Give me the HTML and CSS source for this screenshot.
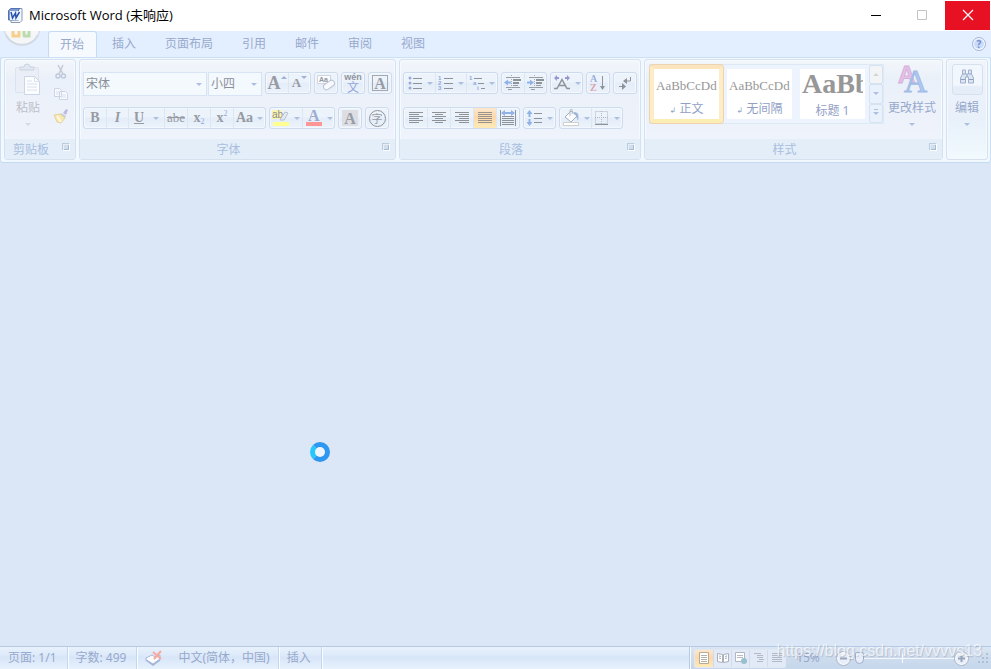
FILE: index.html
```html
<!DOCTYPE html>
<html lang="zh-CN">
<head>
    <meta charset="UTF-8">
    <meta name="viewport" content="width=device-width, initial-scale=1.0">
    <title>Microsoft Word (未响应)</title>
    <link rel="stylesheet" href="styles.css">
</head>
<body>
    <header class="titlebar">
        <svg class="app-icon" width="16" height="16" viewBox="0 0 16 16">
            <path d="M4 1.500h11v12l-2 2H4z" fill="#f4f7fc" stroke="#8a98b5"/>
            <path d="M1.500 3.500 4 1.500h9L11.500 3v10h-10z" fill="#7d9bd6" stroke="#5672ab"/>
            <path d="M3 4h10v9H3z" fill="#eef4ff"/>
            <path d="M4 5l1.500 6L8.500 6l.5 5 3.500-6" fill="none" stroke="#2a52ae" stroke-width="1.500"/>
        </svg>
        <h1>Microsoft Word (未响应)</h1>
        <div class="window-buttons">
            <button aria-label="最小化"><svg width="12" height="12" viewBox="0 0 12 12"><path d="M1 6.500h10" stroke="#000"/></svg></button>
            <button aria-label="最大化" disabled><svg width="12" height="12" viewBox="0 0 12 12"><path d="M1.500 1.500h9v9h-9z" fill="none" stroke="#c4c4c4"/></svg></button>
            <button class="close" aria-label="关闭"><svg width="12" height="12" viewBox="0 0 12 12"><path d="M1 1l10 10M11 1L1 11" stroke="#fff" stroke-width="1.200"/></svg></button>
        </div>
    </header>

    <nav class="tabs">
        <button class="office" aria-label="Office 按钮">
            <svg width="36" height="16" viewBox="0 0 36 16">
                <circle cx="18" cy="-4" r="18" fill="#f5f6f8" stroke="#cbd3df"/>
                <path d="M2 4a18 18 0 0 0 32 0" fill="none" stroke="#d3dae4" stroke-width="2"/>
                <path d="M9 0v5h6V1M15 5V0" fill="none" stroke="#f5d08c" stroke-width="3"/>
                <path d="M19 5h6V0M20 5V0" fill="none" stroke="#bcdcae" stroke-width="3"/>
            </svg>
        </button>
        <button class="tab active">开始</button>
        <button class="tab">插入</button>
        <button class="tab">页面布局</button>
        <button class="tab">引用</button>
        <button class="tab">邮件</button>
        <button class="tab">审阅</button>
        <button class="tab">视图</button>
        <button class="help" aria-label="帮助">?</button>
    </nav>

    <div class="ribbon">
        <section class="group clipboard">
            <div class="group-body">
                <button class="big-button paste">
                    <svg width="28" height="32" viewBox="0 0 28 32">
                        <rect x="1.500" y="3.500" width="23" height="25" rx="1" fill="#e9eef7" stroke="#dce3ee"/>
                        <path d="M6 6V3h4a3 3 0 0 1 6 0h4v3z" fill="#e2e8f2" stroke="#cbd3e0"/>
                        <path d="M10.500 12.500h10l5 5v13h-15z" fill="#fcfdff" stroke="#cbd5e6"/>
                        <path d="M20.500 12.500v5h5M13 17h5M13 20h10M13 23h10M13 26h10" fill="none" stroke="#dae1ec"/>
                    </svg>
                    <span>粘贴</span>
                    <i class="caret"></i>
                </button>
                <div class="side-buttons">
                    <button aria-label="剪切"><svg width="16" height="16" viewBox="0 0 16 16"><path d="M5 1l5 9M10 1L6 10" stroke="#c4cad5" stroke-width="1.500"/><circle cx="5" cy="12" r="2" fill="none" stroke="#bfc9dc" stroke-width="1.500"/><circle cx="10.500" cy="12" r="2" fill="none" stroke="#bfc9dc" stroke-width="1.500"/></svg></button>
                    <button aria-label="复制"><svg width="16" height="16" viewBox="0 0 16 16"><path d="M1.500 2.500h5l2 2v6h-7zM6.500 5.500h6l2 2v6h-8z" fill="#f8faff" stroke="#ccd5e4"/><path d="M3 6h3M3 8h3M8 9h5M8 11h5" stroke="#dae1ed"/></svg></button>
                    <button aria-label="格式刷"><svg width="16" height="16" viewBox="0 0 16 16"><path d="M10 5l3-4 2 1-2 5z" fill="#bdbce0"/><path d="M8 5l5 3-1 2-5-3z" fill="#c9cbd8"/><path d="M1 7l6-1 5 4-4 5-4-1z" fill="#f7e8b2" stroke="#e4d19b"/><path d="M4 8l4 6" stroke="#fff9df" stroke-width="2"/></svg></button>
                </div>
            </div>
            <footer>剪贴板<button class="launcher" aria-label="剪贴板选项"></button></footer>
        </section>

        <section class="group font">
            <div class="group-body">
                <div class="row">
                    <div class="combo">
                        <label class="select name"><select aria-label="字体"><option>宋体</option></select><i class="caret"></i></label>
                        <label class="select size"><select aria-label="字号"><option>小四</option></select><i class="caret"></i></label>
                    </div>
                    <div class="set">
                        <button aria-label="增大字体"><b class="grow">A</b><i class="mark up"></i></button>
                        <button aria-label="缩小字体"><b class="shrink">A</b><i class="mark"></i></button>
                    </div>
                    <div class="set"><button aria-label="清除格式"><svg width="20" height="18" viewBox="0 0 20 18"><path d="M1.500 1.500h13v8h-13z" fill="#fafcff" stroke="#d0d6df"/><text x="3" y="8" class="tiny">Aa</text><rect x="7" y="8" width="12" height="6" rx="3" transform="rotate(-35 13 11)" fill="#f8fafd" stroke="#b9c2d4"/></svg></button></div>
                    <div class="set"><button class="pinyin" aria-label="拼音指南"><small>wén</small><span>文</span></button></div>
                    <div class="set"><button aria-label="字符边框"><b class="boxed">A</b></button></div>
                </div>
                <div class="row">
                    <div class="set">
                        <button aria-label="加粗"><b>B</b></button>
                        <button aria-label="倾斜"><b class="italic">I</b></button>
                        <button class="wide" aria-label="下划线"><b class="under">U</b><i class="caret"></i></button>
                        <button class="script" aria-label="删除线"><s>abe</s></button>
                        <button class="script" aria-label="下标"><b>x</b><sub>2</sub></button>
                        <button class="script" aria-label="上标"><b>x</b><sup>2</sup></button>
                        <button class="drop" aria-label="更改大小写"><b>Aa</b><i class="caret"></i></button>
                    </div>
                    <div class="set">
                        <button class="drop" aria-label="突出显示"><svg width="18" height="18" viewBox="0 0 18 18"><path d="M0 1h10v9H0z" fill="#faf3b6"/><text x="0" y="9" class="ab">ab</text><path d="M8 11l5-8 3 1-4 7z" fill="#e7ecf4" stroke="#b4bfd3"/><path d="M1 13h16v4H1z" fill="#ffff91"/></svg><i class="caret"></i></button>
                        <button class="drop" aria-label="字体颜色"><svg width="18" height="18" viewBox="0 0 18 18"><text x="3" y="12" class="color-a">A</text><path d="M1 13h16v4H1z" fill="#ff9696"/></svg><i class="caret"></i></button>
                    </div>
                    <div class="set"><button aria-label="字符底纹"><b class="shaded">A</b></button></div>
                    <div class="set"><button aria-label="带圈字符"><span class="circled">字</span></button></div>
                </div>
            </div>
            <footer>字体<button class="launcher" aria-label="字体选项"></button></footer>
        </section>

        <section class="group paragraph">
            <div class="group-body">
                <div class="row">
                    <div class="set">
                        <button class="drop" aria-label="项目符号"><svg width="16" height="16" viewBox="0 0 16 16"><g fill="#9aabd9"><circle cx="3" cy="3" r="1.500"/><circle cx="3" cy="8" r="1.500"/><circle cx="3" cy="13" r="1.500"/></g><path d="M6 3.500h9M6 8.500h9M6 13.500h9" stroke="#8e9299"/></svg><i class="caret"></i></button>
                        <button class="drop" aria-label="编号"><svg width="16" height="16" viewBox="0 0 16 16"><g class="digits"><text x="0" y="5">1</text><text x="0" y="10">2</text><text x="0" y="15">3</text></g><path d="M6 3.500h9M6 8.500h9M6 13.500h9" stroke="#8e9299"/></svg><i class="caret"></i></button>
                        <button class="drop" aria-label="多级列表"><svg width="16" height="16" viewBox="0 0 16 16"><g class="digits"><text x="0" y="5">1</text><text x="4" y="10">a</text><text x="8" y="15">i</text></g><path d="M5 3.500h8M9 8.500h6M12 13.500h4" stroke="#8e9299"/></svg><i class="caret"></i></button>
                    </div>
                    <div class="set">
                        <button aria-label="减少缩进量"><svg width="18" height="16" viewBox="0 0 18 16"><path d="M2 2.500h14M9 10.500h5M2 12.500h14M4 14.500h4" stroke="#989ca3"/><path d="M9 5h8M9 8h6" stroke="#8e9299" stroke-width="2"/><path d="M7.500 0v16" stroke="#a5abb4" stroke-dasharray="1 1"/><path d="M0 7.500l4-3v2h3v2H4v2z" fill="#8fb2e8"/></svg></button>
                        <button aria-label="增加缩进量"><svg width="18" height="16" viewBox="0 0 18 16"><path d="M2 2.500h14M9 10.500h5M2 12.500h14M4 14.500h4" stroke="#989ca3"/><path d="M9 5h8M9 8h6" stroke="#8e9299" stroke-width="2"/><path d="M7.500 0v16" stroke="#a5abb4" stroke-dasharray="1 1"/><path d="M7 7.500l-4-3v2H0v2h3v2z" fill="#8fb2e8"/></svg></button>
                    </div>
                    <div class="set"><button class="drop" aria-label="中文版式"><svg width="18" height="16" viewBox="0 0 18 16"><path d="M1 13.500h3l5-9 5 9h3M6 10.500h6" fill="none" stroke="#8e9299" stroke-width="1.500"/><path d="M1 3l3-3v2h2v2H4v2zM17 3l-3-3v2h-2v2h2v2z" fill="#9698d4"/></svg><i class="caret"></i></button></div>
                    <div class="set"><button aria-label="排序"><svg width="18" height="18" viewBox="0 0 18 18"><text x="1" y="8" class="sort-a">A</text><text x="1" y="17" class="sort-z">Z</text><path d="M13.500 2v12" stroke="#8e9299"/><path d="M11 12h5l-2.500 4z" fill="#8e9299"/></svg></button></div>
                    <div class="set"><button aria-label="显示编辑标记"><svg width="16" height="16" viewBox="0 0 16 16"><path d="M13.500 2v4H8M2 11.500h4" fill="none" stroke="#8e9299"/><path d="M10 3v6L6 6zM5 8v7l4-3.500z" fill="#8e9299"/></svg></button></div>
                </div>
                <div class="row">
                    <div class="set align">
                        <button aria-label="左对齐"><svg width="14" height="14" viewBox="0 0 14 14"><path d="M0 1.500h14M0 3.500h10M0 5.500h14M0 7.500h10M0 9.500h14M0 11.500h10" stroke="#8e9299"/></svg></button>
                        <button aria-label="居中"><svg width="14" height="14" viewBox="0 0 14 14"><path d="M0 1.500h14M3 3.500h8M0 5.500h14M3 7.500h8M0 9.500h14M3 11.500h8" stroke="#8e9299"/></svg></button>
                        <button aria-label="右对齐"><svg width="14" height="14" viewBox="0 0 14 14"><path d="M0 1.500h14M4 3.500h10M0 5.500h14M4 7.500h10M0 9.500h14M4 11.500h10" stroke="#8e9299"/></svg></button>
                        <button class="pressed" aria-label="两端对齐"><svg width="14" height="14" viewBox="0 0 14 14"><path d="M0 1.500h14M0 3.500h14M0 5.500h14M0 7.500h14M0 9.500h14M0 11.500h14" stroke="#9a938c"/></svg></button>
                        <button aria-label="分散对齐"><svg width="16" height="16" viewBox="0 0 16 16"><path d="M.5 0v16M15.500 0v16M2 6.500h12M2 8.500h12M2 10.500h12M2 12.500h12M2 14.500h12" stroke="#8e9299"/><path d="M1 3l4-3v2h6V0l4 3-4 3V4H5v2z" fill="#8fb2e8"/></svg></button>
                    </div>
                    <div class="set"><button class="drop" aria-label="行距"><svg width="16" height="16" viewBox="0 0 16 16"><path d="M7 3.500h8M7 8.500h8M7 12.500h8" stroke="#8e9299"/><path d="M2.500 0l3 4h-2v3h-2V4h-2zM2.500 16l3-4h-2V9h-2v3h-2z" fill="#8fb2e8"/></svg><i class="caret"></i></button></div>
                    <div class="set">
                        <button class="drop" aria-label="底纹"><svg width="18" height="18" viewBox="0 0 18 18"><path d="M12 3c5 0 5 4 4 9-1-3-2-5-4-6z" fill="#9db7df"/><path d="M3 8l6-6 6 5-6 6z" fill="#fbfcfe" stroke="#a1adc1"/><path d="M8 7V1c2-2 3 0 2 4" fill="none" stroke="#b3b8c2"/><path d="M1.500 13.500h15v3h-15z" fill="#fff" stroke="#cfcfcd"/></svg><i class="caret"></i></button>
                        <button class="drop" aria-label="边框"><svg width="16" height="16" viewBox="0 0 16 16"><path d="M1.500 1.500h12v12h-12zM7.500 1v13M1 7.500h13" fill="none" stroke="#b1b7c1" stroke-dasharray="1 1"/><path d="M1 14.500h13" stroke="#8e9299"/></svg><i class="caret"></i></button>
                    </div>
                </div>
            </div>
            <footer>段落<button class="launcher" aria-label="段落选项"></button></footer>
        </section>

        <section class="group styles">
            <div class="group-body">
                <div class="gallery">
                    <button class="style selected"><span class="sample">AaBbCcDd</span><span><small>↲</small> 正文</span></button>
                    <button class="style"><span class="sample">AaBbCcDd</span><span><small>↲</small> 无间隔</span></button>
                    <button class="style"><span class="sample heading">AaBb</span><span>标题 1</span></button>
                    <div class="scroller">
                        <button aria-label="上一行" disabled><i class="caret up"></i></button>
                        <button aria-label="下一行"><i class="caret"></i></button>
                        <button aria-label="其他样式"><i class="caret more"></i></button>
                    </div>
                </div>
                <button class="big-button">
                    <svg width="32" height="32" viewBox="0 0 32 32">
                        <text x="2" y="19" class="pink-a">A</text>
                        <text x="8" y="28" class="blue-a">A</text>
                    </svg>
                    <span>更改样式</span>
                    <i class="caret"></i>
                </button>
            </div>
            <footer>样式<button class="launcher" aria-label="样式选项"></button></footer>
        </section>

        <section class="group editing">
            <button class="big-button">
                <span class="edit-icon">
                    <svg width="16" height="16" viewBox="0 0 16 16"><path d="M3.500 1h3v4h3V1h3v4l2 4v5h-5V8h-3v6h-5V9l2-4z" fill="#dce5f5" stroke="#a1b0cd"/><path d="M2 10.500h4M10 10.500h4M8 5v3M4 5h2M10 5h2" stroke="#8f9fc0"/></svg>
                </span>
                <span>编辑</span>
                <i class="caret"></i>
            </button>
        </section>
    </div>

    <main class="workspace">
        <div class="busy" role="progressbar" aria-label="未响应"></div>
    </main>

    <footer class="statusbar">
        <div class="status-info">
            <button>页面: 1/1</button>
            <button>字数: 499</button>
            <button class="proof" aria-label="校对"><svg width="18" height="16" viewBox="0 0 18 16"><path d="M1 8l6-3 3 2 5-2v4l-7 5-7-4z" fill="#fafcff" stroke="#aab9d7"/><path d="M1 10l7 5 7-5" fill="none" stroke="#a1b2d8" stroke-width="1.500"/><path d="M8 2l8 7M16 1L9 9" stroke="#f8a89d" stroke-width="2"/></svg></button>
            <button class="language">中文(简体，中国)</button>
            <button>插入</button>
        </div>
        <div class="status-view">
            <div class="views">
                <button class="pressed" aria-label="页面视图"><svg width="12" height="12" viewBox="0 0 12 12"><path d="M1.500.5h9v11h-9z" fill="#fff" stroke="#b9aa91"/><path d="M3 3.500h6M3 5.500h6M3 7.500h6M3 9.500h6" stroke="#b5b1ac"/></svg></button>
                <button aria-label="阅读版式"><svg width="12" height="12" viewBox="0 0 12 12"><path d="M.5 1.500l5 1v8l-5-1zM11.500 1.500l-5 1v8l5-1z" fill="#fff" stroke="#a9b0bb"/><path d="M2 4l2 .5M2 6l2 .5M8 4.500l2-.5M8 6.500l2-.5" stroke="#a9b0bb"/></svg></button>
                <button aria-label="Web 版式"><svg width="12" height="12" viewBox="0 0 12 12"><path d="M.5.5h9v9h-9z" fill="#fff" stroke="#b0b7c2"/><path d="M2 3.500h6M2 5.500h6" stroke="#b5bac3"/><circle cx="9" cy="9" r="3" fill="#97c0ce"/></svg></button>
                <button aria-label="大纲视图"><svg width="12" height="12" viewBox="0 0 12 12"><path d="M1 1.500h7M4 3.500h6M4 5.500h6M6 7.500h5M4 9.500h6" stroke="#b2b9c4"/></svg></button>
                <button aria-label="普通视图"><svg width="12" height="12" viewBox="0 0 12 12"><path d="M1 1.500h10M1 3.500h10M1 5.500h10M1 7.500h10M1 9.500h10" stroke="#b2b9c4"/></svg></button>
            </div>
            <button class="percent">15%</button>
            <div class="zoom-slider">
                <button class="round" aria-label="缩小"><svg width="9" height="9" viewBox="0 0 9 9"><path d="M1 4.500h7" stroke="#98a5bc" stroke-width="2"/></svg></button>
                <input class="zoom" type="range" min="10" max="500" value="15" aria-label="显示比例">
                <button class="round" aria-label="放大"><svg width="9" height="9" viewBox="0 0 9 9"><path d="M1 4.500h7M4.500 1v7" stroke="#98a5bc" stroke-width="2"/></svg></button>
            </div>
            <svg class="grip" width="12" height="12" viewBox="0 0 12 12"><path d="M9 1h2v2H9zM5 5h2v2H5zM9 5h2v2H9zM1 9h2v2H1zM5 9h2v2H5zM9 9h2v2H9z" fill="#aebfd8"/></svg>
        </div>
        <span class="watermark">https://blog.csdn.net/vvvvs13</span>
    </footer>
</body>
</html>
```
FILE: styles.css
```css
* {
    margin: 0;
    padding: 0;
    box-sizing: border-box;
}

body {
    display: flex;
    flex-direction: column;
    min-height: 100vh;
    background: #dbe6f6;
    font-family: "Noto Sans", "Noto Sans CJK SC", sans-serif;
    font-size: 12px;
    line-height: 16px;
    color: #98a9cc;
}

button,
select {
    font: inherit;
    color: inherit;
    background: none;
    border: none;
}

svg {
    display: block;
    flex: none;
    overflow: visible;
}

/* Title bar */
.titlebar {
    display: flex;
    align-items: center;
    height: 31px;
    padding: 0 0 1px 7px;
    background: #fff;
    color: #000;
}

.titlebar h1 {
    margin-left: 6px;
    font: 13px/16px "Open Sans", "Noto Sans CJK SC", sans-serif;
}

.window-buttons {
    display: flex;
    margin: 0 1px 0 auto;
}

.window-buttons button {
    display: flex;
    align-items: center;
    justify-content: center;
    width: 46px;
    height: 29px;
}

.window-buttons .close {
    width: 45px;
    background: #e81123;
}

/* Tabs */
.tabs {
    display: flex;
    gap: 1px;
    height: 26px;
    padding: 0 5px 0 4px;
    background: #e3efff;
}

.office {
    width: 43px;
    height: 16px;
    overflow: hidden;
}

.office svg {
    overflow: hidden;
}

.tab {
    padding: 0 14px;
}

.tab.active {
    padding: 0 12px 0 11px;
    background: #f6faff;
    border: 1px solid #c5dbf4;
    border-bottom: none;
    border-radius: 3px 3px 0 0;
}

.help {
    align-self: center;
    width: 14px;
    height: 14px;
    margin-left: auto;
    border: 1px solid #a6b8dc;
    border-radius: 50%;
    background: #cbdcfb;
    box-shadow: inset 0 0 0 1px #fff;
    color: #768fc8;
    font-weight: bold;
    font-size: 10px;
    line-height: 12px;
}

/* Ribbon */
.ribbon {
    display: flex;
    gap: 3px;
    height: 106px;
    padding: 1px 2px 2px 3px;
    background: #f1f8ff;
    border: 1px solid #cbdff5;
    border-bottom-color: #c4dbed;
    border-radius: 3px;
}

.group {
    display: flex;
    flex: none;
    flex-direction: column;
    background: linear-gradient(#f3f6fb, #eaf0f9 20%, #eff3fb 80%);
    border: 1px solid #d5e1ef;
    border-radius: 3px;
    box-shadow: inset 0 0 0 1px #f6faff;
}

.group-body {
    flex: 1;
}

.group footer {
    position: relative;
    flex: none;
    height: 20px;
    padding-right: 18px;
    background: #e4eef9;
    color: #a9bedf;
    line-height: 22px;
    text-align: center;
}

.launcher {
    position: absolute;
    right: 5px;
    top: 4px;
    width: 8px;
    height: 8px;
    border: 1px solid #bdcde0;
    border-right-color: #fff;
    border-bottom-color: #fff;
}

.launcher::after {
    content: "";
    position: absolute;
    right: 0;
    bottom: 0;
    width: 4px;
    height: 4px;
    border: solid #a6b9d2;
    border-width: 0 1px 1px 0;
    background: #d1deed;
}

.caret {
    flex: none;
    width: 0;
    height: 0;
    border: 3px solid transparent;
    border-top-color: #adbfe0;
    border-bottom: none;
}

.caret.up {
    border: 3px solid transparent;
    border-top: none;
    border-bottom-color: #d1d5dc;
}

.clipboard {
    width: 72px;
    color: #bcc0ca;
}

.clipboard .group-body {
    display: flex;
    padding: 4px 6px 0 7px;
}

.clipboard .caret {
    border-top-color: #d4d9e3;
}

.big-button {
    display: flex;
    flex-direction: column;
    align-items: center;
    white-space: nowrap;
}

.big-button > span + .caret {
    margin-top: 7px;
}

.big-button > svg + span {
    margin-top: 4px;
}

.paste {
    width: 32px;
}

.side-buttons {
    display: flex;
    flex-direction: column;
    gap: 6px;
    margin-left: auto;
}

.row {
    display: flex;
    align-items: flex-start;
    gap: 3px;
    height: 26px;
}

.row + .row {
    margin-top: 9px;
}

.font .group-body,
.paragraph .group-body {
    padding: 12px 3px 0;
}

.set {
    display: flex;
    height: 22px;
    border: 1px solid #cddbed;
    border-radius: 3px;
    background: linear-gradient(#edf3fb 45%, #e4edf8 50%, #ebf2fb);
    box-shadow: inset 0 0 0 1px #f3f8fe;
}

.set button {
    display: flex;
    align-items: center;
    justify-content: center;
    width: 22px;
    color: #979ba3;
    font-family: "Liberation Serif", serif;
    font-size: 14px;
}

.set button + button {
    border-left: 1px solid #dce7f4;
}

.set .drop {
    width: 32px;
    gap: 4px;
}

.paragraph .set .drop {
    width: 31px;
}

.set .wide {
    width: 36px;
    gap: 9px;
}

.set .script {
    width: 23px;
}

.script s {
    font-size: 13px;
}

.align button {
    width: 23px;
}

.combo {
    display: flex;
    gap: 1px;
}

.select {
    display: flex;
    align-items: center;
    height: 24px;
    padding: 0 4px 0 2px;
    border: 1px solid #d7e4f3;
    background: #f4f9fe;
}

.select select {
    flex: 1;
    min-width: 0;
    appearance: none;
    color: #8b9098;
}

.select.name {
    width: 124px;
}

.select.size {
    width: 54px;
}

.mark {
    align-self: flex-start;
    margin-top: 3px;
    border: 3px solid transparent;
    border-top-color: #a2afd9;
    border-bottom: none;
}

.mark.up {
    border: 3px solid transparent;
    border-top: none;
    border-bottom-color: #a2afd9;
}

.set .grow {
    font-size: 18px;
}

.set .shrink {
    font-size: 13px;
}

.set .pinyin {
    flex-direction: column;
    color: #94a7dc;
    font: 12px/12px "Noto Sans CJK SC", sans-serif;
}

.pinyin small {
    color: #8e949e;
    font: bold 9px/8px "Liberation Sans", sans-serif;
}

.boxed,
.shaded {
    width: 16px;
    height: 16px;
    border: 1px solid #a3a8b1;
    font-size: 16px;
    line-height: 15px;
}

.shaded {
    border-color: #dcdee3;
    background: #dcdee3;
}

.circled {
    width: 17px;
    height: 17px;
    border: 1px solid #8e949e;
    border-radius: 50%;
    font: 11px/14px "Noto Sans CJK SC", sans-serif;
}

.italic {
    font-style: italic;
}

.under {
    text-decoration: underline;
}

.set sub,
.set sup {
    font-size: 8px;
    line-height: 8px;
    color: #8faade;
}

.set sub {
    margin-top: 8px;
}

.set sup {
    margin-bottom: 8px;
}

.tiny {
    font: bold 7px "Liberation Sans", sans-serif;
    fill: #91969e;
}

.ab {
    font: 10px "Liberation Sans", sans-serif;
    fill: #8c8f86;
}

.color-a {
    font: bold 16px "Liberation Serif", serif;
    fill: #9cabd0;
}

.digits {
    font: bold 6px "Liberation Sans", sans-serif;
    fill: #93a9dd;
}

.sort-a {
    font: bold 10px "Liberation Serif", serif;
    fill: #9cb0dc;
}

.sort-z {
    font: bold 10px "Liberation Serif", serif;
    fill: #dba4ad;
}

.pressed {
    background: linear-gradient(#fce8cf, #fbd8ab 45%, #fdeab7);
}

/* Styles gallery */
.styles {
    flex: 1;
}

.styles .group-body {
    display: flex;
    align-items: flex-start;
    justify-content: space-between;
    padding: 4px 6px 0 4px;
}

.gallery {
    display: flex;
    height: 60px;
    border: 1px solid #dde9f5;
    background: #edf4fe;
}

.style {
    display: flex;
    flex-direction: column;
    align-items: center;
    gap: 4px;
    width: 73px;
    padding: 2px 2px 0;
    border: 4px solid transparent;
    background: #fff;
    background-clip: padding-box;
    white-space: nowrap;
    color: #929fc5;
}

.style.selected {
    border-color: #fce5bd #fdecc4 #fcedb5;
    border-radius: 3px;
    box-shadow: 0 0 0 1px #ecd3b3;
}

.style small {
    font-family: "DejaVu Sans", sans-serif;
    font-size: 8px;
}

.sample {
    align-self: stretch;
    height: 28px;
    overflow: hidden;
    text-align: left;
    font: 13px/30px "Liberation Serif", serif;
    color: #979797;
}

.sample.heading {
    font-size: 28px;
    font-weight: bold;
    line-height: 26px;
}

.scroller {
    display: flex;
    flex-direction: column;
    width: 14px;
}

.scroller button {
    display: flex;
    flex: 1;
    align-items: center;
    justify-content: center;
    border: 1px solid #d4e2f2;
    border-radius: 2px;
    background: #e9f2fc;
}

.scroller button:disabled {
    background: #f3f4f6;
}

.more {
    box-shadow: 0 -3px 0 -1px #e9f2fc, 0 -4px 0 -1px #adbfe0;
}

.pink-a {
    font: bold 24px "Liberation Sans", sans-serif;
    fill: #e3c3e6;
    stroke: #d9b0dd;
}

.blue-a {
    font: 32px "Liberation Serif", serif;
    fill: #b0caf0;
    stroke: #a0bbe5;
}

.editing {
    width: 42px;
    align-items: center;
    padding-top: 4px;
    background: linear-gradient(#f0f4fb, #e8f0fa 60%, #f1fafe);
}

.edit-icon {
    display: flex;
    justify-content: center;
    width: 31px;
    height: 31px;
    margin-bottom: 5px;
    padding-top: 4px;
    border: 1px solid #d5e1ef;
    border-radius: 3px;
    background: linear-gradient(#f2f6fd 70%, #e4edf8 75%);
}

/* Document area */
.workspace {
    flex: 1;
    position: relative;
}

.busy {
    position: absolute;
    left: 310px;
    top: 279px;
    width: 20px;
    height: 20px;
    border: 5px solid #2e97f2;
    border-left-color: #26c8fc;
    border-radius: 50%;
    background: #f0f5fb;
}

/* Status bar */
.statusbar {
    position: relative;
    display: flex;
    height: 23px;
    border-top: 1px solid #b5cae6;
    background: linear-gradient(#e9f2fd, #dce9f9 40%, #d6e5f8 45%, #e8f2fe);
}

.status-info {
    display: flex;
    flex: 1;
}

.status-info button {
    padding: 0 10px 0 8px;
    border-right: 1px solid #c5d7ec;
    box-shadow: 1px 0 0 #f8fbff;
}

.status-info .proof {
    border: none;
    box-shadow: none;
}

.status-info .language {
    padding: 0 8px 0 5px;
}

.status-view {
    display: flex;
    align-items: center;
    padding: 0 2px 0 4px;
    border-left: 1px solid #b8cbe2;
    box-shadow: inset 1px 0 0 #f8fbff;
    background: linear-gradient(#dbe6f4, #cddbed 50%, #c6d7ec);
}

.views {
    display: flex;
    height: 19px;
    border: 1px solid #dfe8f3;
    border-radius: 2px;
    background: #e1eaf6;
}

.views button {
    display: flex;
    align-items: center;
    justify-content: center;
    width: 18px;
}

.views button + button {
    border-left: 1px solid #d0dcec;
}

.percent {
    width: 44px;
}

.zoom-slider {
    display: flex;
    align-items: center;
    padding: 0 8px 0 6px;
}

.round {
    display: flex;
    align-items: center;
    justify-content: center;
    width: 15px;
    height: 15px;
    border: 1px solid #a8b6cc;
    border-radius: 50%;
    background: #e8eff8;
    box-shadow: inset 0 0 0 1px #fff;
}

.zoom {
    width: 103px;
    height: 16px;
    appearance: none;
    background: linear-gradient(#f7faff, #f7faff) center / 1px 9px no-repeat,
                linear-gradient(#f1f6fd, #f1f6fd) center / 100% 1px no-repeat;
}

.zoom::-webkit-slider-thumb {
    appearance: none;
    width: 9px;
    height: 12px;
    margin-left: 3px;
    border: 1px solid #9daec9;
    border-radius: 2px 2px 5px 5px;
    background: #e7eef9;
}

.watermark {
    position: absolute;
    right: 9px;
    bottom: 8px;
    font: 16px/20px "Liberation Sans", sans-serif;
    color: rgba(255, 255, 255, 0.7);
    text-shadow: 1px 1px 1px rgba(130, 140, 160, 0.4);
    pointer-events: none;
}
```
